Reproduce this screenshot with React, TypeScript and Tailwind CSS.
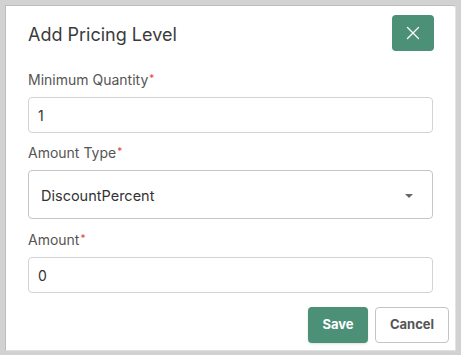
import { X } from "lucide-react";

const Label = ({ text }: { text: string }) => (
  <label className="block text-[14px] leading-[20px] text-[#555]">
    {text}
    <sup className="text-[10px] text-[#e0443e] ml-[1px] relative -top-[3px]">*</sup>
  </label>
);

const App = () => {
  return (
    <div
      className="w-[461px] h-[355px] bg-[#d2d2d2] pt-[5px] pl-[5px] pr-[5px] pb-[4px]"
      style={{ fontFamily: "Inter, 'Noto Sans', sans-serif" }}
    >
      <div className="h-full bg-white border border-[#bdbdbd] border-r-[#e4e4e4] border-b-[#e0e0e0] rounded-tr-[3px] pt-[9px] px-[22px] flex flex-col">
        {/* Header */}
        <div className="flex items-center justify-between h-[36px]">
          <h2 className="text-[18px] text-[#3b3b3b] pt-[2px]">Add Pricing Level</h2>
          <button className="w-[42px] h-[36px] -mr-[1px] bg-[#4b9077] rounded-[4px] flex items-center justify-center text-white">
            <X className="w-[22px] h-[22px]" strokeWidth={1.4} />
          </button>
        </div>

        {/* Minimum Quantity */}
        <div className="mt-[19px]">
          <Label text="Minimum Quantity" />
          <div className="mt-[7px] h-[36px] border border-[#d3d3d3] rounded-[4px] flex items-center px-[9px] text-[14px] text-[#333]">
            1
          </div>
        </div>

        {/* Amount Type */}
        <div className="mt-[10px]">
          <Label text="Amount Type" />
          <div className="mt-[7px] h-[49px] border border-[#c6c6c6] rounded-[4px] flex items-center justify-between pt-[3px] pl-[12px] pr-[19px] text-[14.5px] text-[#333]">
            <span>DiscountPercent</span>
            <span className="w-0 h-0 border-l-[4px] border-r-[4px] border-t-[4px] border-l-transparent border-r-transparent border-t-[#666]" />
          </div>
        </div>

        {/* Amount */}
        <div className="mt-[11px]">
          <Label text="Amount" />
          <div className="mt-[7px] h-[36px] border border-[#d3d3d3] rounded-[4px] flex items-center px-[9px] text-[14px] text-[#333]">
            0
          </div>
        </div>

        {/* Actions */}
        <div className="mt-[14px] -mr-[16px] flex justify-end gap-[7px]">
          <button className="w-[60px] h-[36px] bg-[#4b9077] rounded-[4px] text-white text-[13px] font-bold shadow-sm">
            Save
          </button>
          <button className="w-[74px] h-[36px] bg-white border border-[#c4c4c4] rounded-[4px] text-[#555] text-[13px] font-bold">
            Cancel
          </button>
        </div>
      </div>
    </div>
  );
};

export default App;
